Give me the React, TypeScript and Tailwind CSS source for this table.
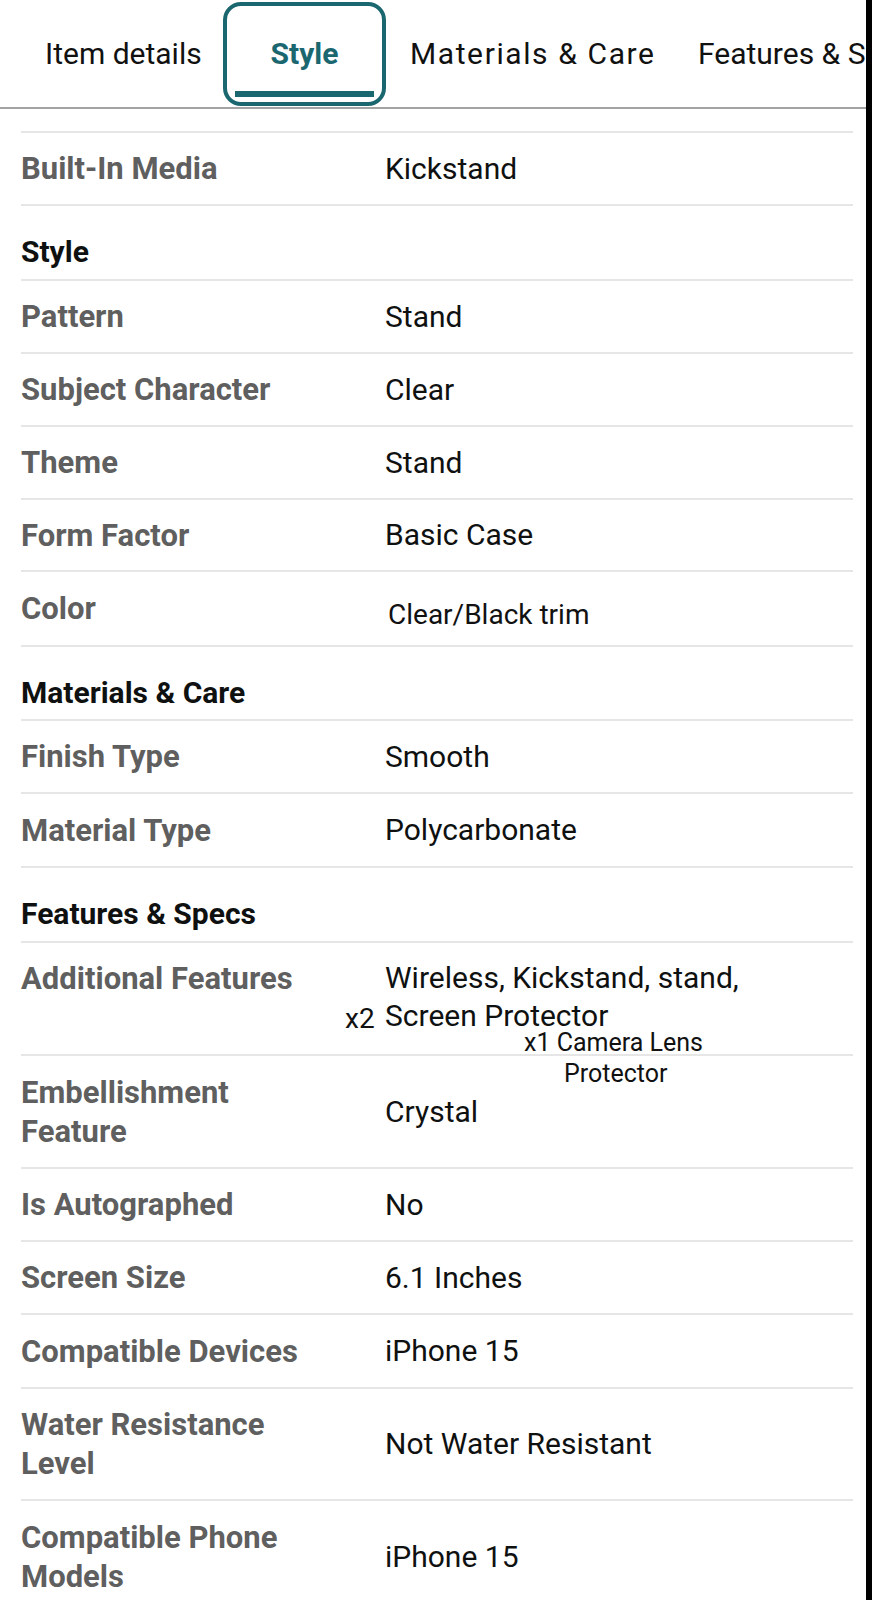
import React from "react";

type Row =
  | { kind: "row"; label: string; value: React.ReactNode; h: string; extra?: string }
  | { kind: "section"; label: string; h: string };

const rows: Row[] = [
  { kind: "row", label: "Built-In Media", value: "Kickstand", h: "h-[73px]" },
  { kind: "section", label: "Style", h: "h-[75px]" },
  { kind: "row", label: "Pattern", value: "Stand", h: "h-[73px]" },
  { kind: "row", label: "Subject Character", value: "Clear", h: "h-[73px]" },
  { kind: "row", label: "Theme", value: "Stand", h: "h-[73px]" },
  { kind: "row", label: "Form Factor", value: "Basic Case", h: "h-[72px]" },
  {
    kind: "row",
    label: "Color",
    value: <span className="ml-[3px] mt-[13px] block text-[28px] leading-[32px] text-[#111]">Clear/Black trim</span>,
    h: "h-[75px]",
  },
  { kind: "section", label: "Materials & Care", h: "h-[74px]" },
  { kind: "row", label: "Finish Type", value: "Smooth", h: "h-[73px]" },
  { kind: "row", label: "Material Type", value: "Polycarbonate", h: "h-[74px]" },
  { kind: "section", label: "Features & Specs", h: "h-[75px]" },
  {
    kind: "row",
    label: "Additional Features",
    value: (
      <>
        Wireless, Kickstand, stand,
        <br />
        Screen Protector
      </>
    ),
    h: "h-[113px]",
    extra: "additional",
  },
  { kind: "row", label: "Embellishment Feature", value: "Crystal", h: "h-[113px]" },
  { kind: "row", label: "Is Autographed", value: "No", h: "h-[73px]" },
  { kind: "row", label: "Screen Size", value: "6.1 Inches", h: "h-[73px]" },
  { kind: "row", label: "Compatible Devices", value: "iPhone 15", h: "h-[74px]" },
  { kind: "row", label: "Water Resistance Level", value: "Not Water Resistant", h: "h-[112px]" },
  { kind: "row", label: "Compatible Phone Models", value: "iPhone 15", h: "h-[113px]" },
];

function SpecRow({ row }: { row: Row }) {
  if (row.kind === "section") {
    return (
      <div className={`${row.h} border-t-2 border-[#e6e6e6] pt-[26px]`}>
        <div className="text-[30px] leading-[39px] font-bold text-[#0f1111]">{row.label}</div>
      </div>
    );
  }

  const top = row.extra === "additional";

  return (
    <div
      className={`relative ${row.h} grid grid-cols-[364px_1fr] border-t-2 border-[#e6e6e6] ${
        top ? "items-start pt-[16px]" : "items-center"
      }`}
    >
      <div className="max-w-[295px] text-[31px] leading-[39px] font-bold text-[#5f5f5f]">{row.label}</div>
      <div className="text-[30px] leading-[38px] text-[#0f1111]">{row.value}</div>

      {/* edited-in annotations */}
      {top && (
        <>
          <span className="absolute left-[324px] top-[60px] text-[28px] leading-[32px] text-[#111]">x2</span>
          <span className="absolute left-[503px] top-[85px] text-[25px] leading-[30px] text-[#111] whitespace-nowrap">
            x1 Camera Lens
          </span>
          <span className="absolute left-[543px] top-[116px] text-[25px] leading-[30px] text-[#111]">Protector</span>
        </>
      )}
    </div>
  );
}

export default function App() {
  return (
    <div className="flex h-[1600px] w-[872px] overflow-hidden bg-white font-['Roboto',sans-serif]">
      <div className="w-[866px] shrink-0 overflow-hidden">
        {/* Tabs */}
        <div className="flex h-[109px] items-start border-b-2 border-[#a3a3a3] whitespace-nowrap">
          <div className="flex h-[106px] w-[223px] shrink-0 items-center pl-[45px] text-[30px] text-[#111]">
            Item details
          </div>
          <div className="relative mt-[2px] flex h-[104px] w-[163px] shrink-0 items-center justify-center rounded-[18px] border-4 border-[#1b6770]">
            <span className="-mt-[2px] text-[30px] font-bold text-[#1b6770]">Style</span>
            <div className="absolute bottom-[5px] left-[8px] right-[8px] h-[6px] bg-[#1b6770]" />
          </div>
          <div className="flex h-[106px] w-[312px] shrink-0 items-center pl-[24px] text-[30px] tracking-[1.6px] text-[#111]">
            Materials &amp; Care
          </div>
          <div className="flex h-[106px] shrink-0 items-center text-[30px] text-[#111]">Features &amp; Specs</div>
        </div>

        {/* Spec table */}
        <div className="pt-[22px] pl-[21px] pr-[13px]">
          {rows.map((row) => (
            <SpecRow key={row.label} row={row} />
          ))}
        </div>
      </div>
      <div className="w-[6px] shrink-0 bg-black" />
    </div>
  );
}
